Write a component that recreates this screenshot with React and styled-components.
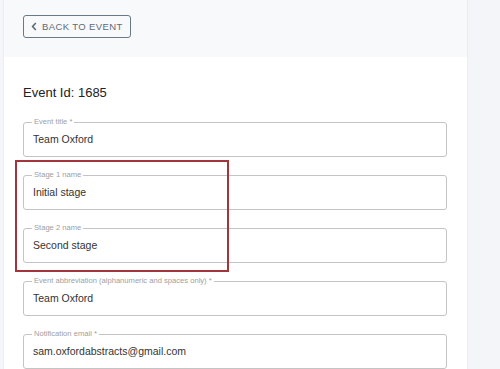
import React from 'react';
import styled, {createGlobalStyle} from 'styled-components';

const Global = createGlobalStyle`
    html, body {
        margin: 0;
        padding: 0;
        background: #f5f6f9;
        font-family: "Liberation Sans", Arial, sans-serif;
        overflow: hidden;
    }
`;

const Page = styled.div`
    display: flex;
    width: 500px;
    height: 369px;
    overflow: hidden;
`;

const Main = styled.main`
    margin-left: 3px;
    width: 463px;
    border-left: 1px solid #eceef2;
    border-right: 1px solid #eceef2;
    display: flex;
    flex-direction: column;
`;

const TopBar = styled.div`
    background: #f8f9fb;
    height: 57px;
    padding: 15px 0 0 19px;
    box-sizing: border-box;
`;

const BackButton = styled.button`
    display: flex;
    align-items: center;
    gap: 5px;
    height: 23px;
    padding: 0 7px 0 7px;
    background: transparent;
    border: 1px solid #6b7886;
    border-radius: 3px;
    color: #5f6b78;
    font-family: "Liberation Sans", Arial, sans-serif;
    font-size: 9.5px;
    letter-spacing: 0.04em;
    text-transform: uppercase;
`;

const Card = styled.section`
    position: relative;
    flex: 1;
    background: #fff;
    padding: 28px 20px 0 19px;
`;

const Title = styled.h2`
    margin: 0 0 22px;
    font-size: 13px;
    font-weight: 400;
    color: #222;
`;

const Fields = styled.div`
    display: flex;
    flex-direction: column;
    gap: 18px;
`;

const Field = styled.fieldset`
    margin: 0;
    box-sizing: border-box;
    border: 1px solid #c4c4c4;
    border-radius: 3px;
    padding: 0 9px;
    position: relative;
    top: -4px;
    margin-bottom: -4px;
    height: 39px;
`;

const Legend = styled.legend`
    font-size: 7.6px;
    color: #a0a0a0;
    padding: 0 2px;
    margin-left: -1px;
    line-height: 8px;
`;

const Value = styled.div`
    font-size: 10.5px;
    color: #333;
    line-height: 14px;
    padding-top: 6px;
`;

const Highlight = styled.div`
    position: absolute;
    left: 11px;
    top: 103px;
    width: 210px;
    height: 108px;
    border: 2.5px solid #a3343a;
    pointer-events: none;
`;

const Side = styled.aside`
    flex: 1;
    background: #f4f5f8;
`;

const fields = [
    ['Event title *', 'Team Oxford'],
    ['Stage 1 name', 'Initial stage'],
    ['Stage 2 name', 'Second stage'],
    ['Event abbreviation (alphanumeric and spaces only) *', 'Team Oxford'],
    ['Notification email *', 'sam.oxfordabstracts@gmail.com'],
];

export default function App() {
    return (
        <Page>
            <Global/>
            <Main>
                <TopBar>
                    <BackButton>
                        <svg width="6" height="9" viewBox="0 0 6 9">
                            <path d="M4.8 1 L1.6 4.5 L4.8 8" fill="none" stroke="#5f6b78" strokeWidth="1.6"/>
                        </svg>
                        Back to event
                    </BackButton>
                </TopBar>
                <Card>
                    <Title>Event Id: 1685</Title>
                    <Fields>
                        {fields.map(([label, value]) => (
                            <Field key={label}>
                                <Legend>{label}</Legend>
                                <Value>{value}</Value>
                            </Field>
                        ))}
                    </Fields>
                    <Highlight/>
                </Card>
            </Main>
            <Side/>
        </Page>
    );
}
